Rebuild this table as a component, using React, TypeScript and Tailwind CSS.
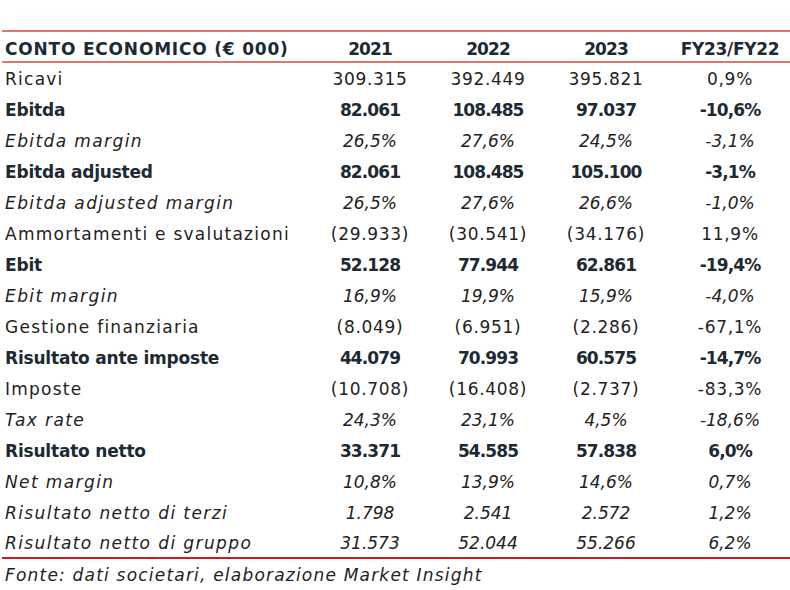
type Row = {
  label: string;
  v: [string, string, string, string];
  kind: "normal" | "bold" | "italic";
};

const rows: Row[] = [
  { label: "Ricavi", v: ["309.315", "392.449", "395.821", "0,9%"], kind: "normal" },
  { label: "Ebitda", v: ["82.061", "108.485", "97.037", "-10,6%"], kind: "bold" },
  { label: "Ebitda margin", v: ["26,5%", "27,6%", "24,5%", "-3,1%"], kind: "italic" },
  { label: "Ebitda adjusted", v: ["82.061", "108.485", "105.100", "-3,1%"], kind: "bold" },
  { label: "Ebitda adjusted margin", v: ["26,5%", "27,6%", "26,6%", "-1,0%"], kind: "italic" },
  { label: "Ammortamenti e svalutazioni", v: ["(29.933)", "(30.541)", "(34.176)", "11,9%"], kind: "normal" },
  { label: "Ebit", v: ["52.128", "77.944", "62.861", "-19,4%"], kind: "bold" },
  { label: "Ebit margin", v: ["16,9%", "19,9%", "15,9%", "-4,0%"], kind: "italic" },
  { label: "Gestione finanziaria", v: ["(8.049)", "(6.951)", "(2.286)", "-67,1%"], kind: "normal" },
  { label: "Risultato ante imposte", v: ["44.079", "70.993", "60.575", "-14,7%"], kind: "bold" },
  { label: "Imposte", v: ["(10.708)", "(16.408)", "(2.737)", "-83,3%"], kind: "normal" },
  { label: "Tax rate", v: ["24,3%", "23,1%", "4,5%", "-18,6%"], kind: "italic" },
  { label: "Risultato netto", v: ["33.371", "54.585", "57.838", "6,0%"], kind: "bold" },
  { label: "Net margin", v: ["10,8%", "13,9%", "14,6%", "0,7%"], kind: "italic" },
  { label: "Risultato netto di terzi", v: ["1.798", "2.541", "2.572", "1,2%"], kind: "italic" },
  { label: "Risultato netto di gruppo", v: ["31.573", "52.044", "55.266", "6,2%"], kind: "italic" },
];

const grid = "grid grid-cols-[309px_118px_118px_118px_1fr] items-center";

const labelStyle = {
  normal: "tracking-[1.25px]",
  bold: "font-bold text-[#1c2a33] tracking-[-0.2px]",
  italic: "italic tracking-[1.4px]",
};

const numStyle = {
  normal: "tracking-[0.7px]",
  bold: "font-bold text-[#1c2a33] tracking-[-0.9px]",
  italic: "italic",
};

export default function App() {
  return (
    <div className="w-[790px] h-[590px] bg-white pt-[30px] font-['DejaVu_Sans',sans-serif] text-[17px] text-[#222]">
      <div className="ml-[2px] border-t-2 border-b-2 border-[#e0786a]">
        <div className={`${grid} h-[29px] pt-[5px] font-bold text-[#1c2a33]`}>
          <div className="pl-[3px] tracking-[0.8px] whitespace-nowrap">CONTO ECONOMICO (€ 000)</div>
          <div className="text-center tracking-[-0.9px]">2021</div>
          <div className="text-center tracking-[-0.9px]">2022</div>
          <div className="text-center tracking-[-0.9px]">2023</div>
          <div className="text-center pl-[5px] tracking-[-0.3px]">FY23/FY22</div>
        </div>
      </div>
      <div className="ml-[2px] border-b-2 border-[#d0181e]">
        {rows.map((r, i) => (
          <div
            key={r.label}
            className={`${grid} pt-[2px] ${i === rows.length - 1 ? "h-[29px]" : "h-[31px]"}`}
          >
            <div className={`pl-[3px] whitespace-nowrap ${labelStyle[r.kind]}`}>{r.label}</div>
            <div className={`text-center ${numStyle[r.kind]}`}>{r.v[0]}</div>
            <div className={`text-center ${numStyle[r.kind]}`}>{r.v[1]}</div>
            <div className={`text-center ${numStyle[r.kind]}`}>{r.v[2]}</div>
            <div className={`text-center pl-[5px] ${numStyle[r.kind]}`}>{r.v[3]}</div>
          </div>
        ))}
      </div>
      <div className="pl-[5px] pt-[4px] italic tracking-[1.2px]">
        Fonte: dati societari, elaborazione Market Insight
      </div>
    </div>
  );
}
